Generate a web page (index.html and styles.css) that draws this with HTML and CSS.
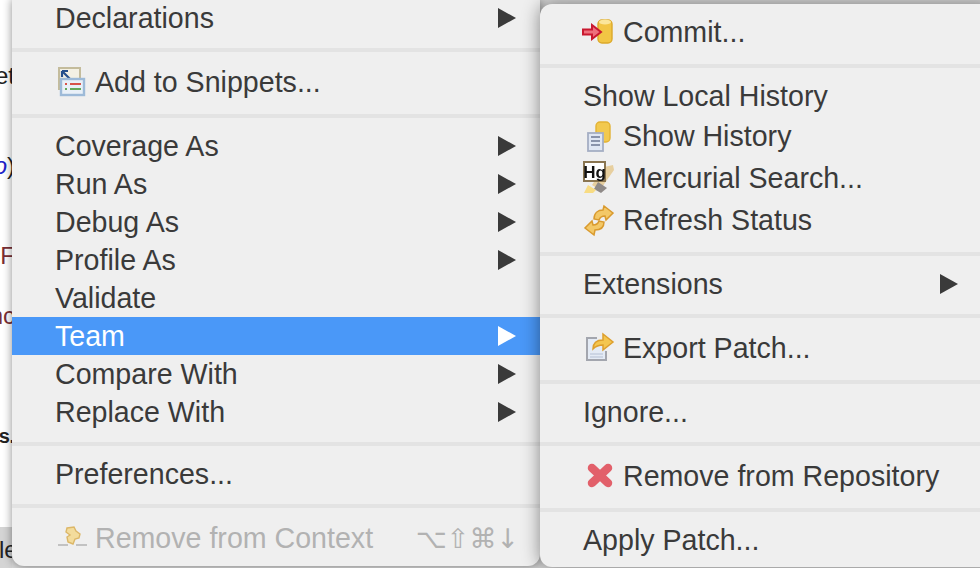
FILE: index.html
```html
<!DOCTYPE html>
<html lang="en">
<head>
    <meta charset="UTF-8">
    <title>Team menu</title>
    <link rel="stylesheet" href="styles.css">
</head>
<body>
    <div class="editor">
        <div class="code">
            <div class="line">&nbsp;</div>
            <div class="line">&nbsp;</div>
            <div class="line">et</div>
            <div class="line">&nbsp;</div>
            <div class="line">&nbsp;</div>
            <div class="line blue"><i>o</i><span class="dark">)</span></div>
            <div class="line">&nbsp;</div>
            <div class="line">&nbsp;</div>
            <div class="line maroon">nF</div>
            <div class="line">&nbsp;</div>
            <div class="line maroon">nc</div>
            <div class="line">&nbsp;</div>
            <div class="line">&nbsp;</div>
            <div class="line">&nbsp;</div>
            <div class="line dots">s .</div>
        </div>
        <div class="status">le</div>
    </div>

    <div class="menu menu-main">
        <div class="item">Declarations<span class="arrow"></span></div>
        <div class="sep"></div>
        <div class="item tall">
            <svg class="icon" viewBox="0 0 40 42">
                <rect x="4" y="7" width="21" height="21" fill="#f4f1e4" stroke="#c4bc9c" stroke-width="2"/>
                <path d="M7 10l9 9M7 10h6M7 10v6" stroke="#26508c" stroke-width="2.2" fill="none"/>
                <rect x="6" y="18" width="23" height="16" fill="#e9f0f8" stroke="#9dbad8" stroke-width="2.400"/>
                <path d="M10 23h2M15 23h11" stroke="#d8534a" stroke-width="2"/>
                <path d="M10 28h2M15 28h11" stroke="#63a85a" stroke-width="2"/>
            </svg>
            Add to Snippets...
        </div>
        <div class="sep"></div>
        <div class="item">Coverage As<span class="arrow"></span></div>
        <div class="item">Run As<span class="arrow"></span></div>
        <div class="item">Debug As<span class="arrow"></span></div>
        <div class="item">Profile As<span class="arrow"></span></div>
        <div class="item">Validate</div>
        <div class="item active">Team<span class="arrow"></span></div>
        <div class="item">Compare With<span class="arrow"></span></div>
        <div class="item">Replace With<span class="arrow"></span></div>
        <div class="sep"></div>
        <div class="item">Preferences...</div>
        <div class="sep"></div>
        <div class="item tall disabled">
            <svg class="icon" viewBox="0 0 40 42">
                <path d="M3 28h10M21 28h11" stroke="#b4b4b4" stroke-width="1.6"/>
                <path d="M12 11l7-1 2 4 4 3-1 4-4 1-2 5-5-2-1-5 3-2-4-3z" fill="#f3dc9c" stroke="#dcb768" stroke-width="1.4"/>
            </svg>
            Remove from Context
            <span class="shortcut">⌥⇧⌘↓</span>
        </div>
    </div>

    <div class="menu menu-sub">
        <div class="item tall">
            <svg class="icon" viewBox="0 0 40 42">
                <rect x="15" y="9" width="14" height="23" rx="4" fill="#f2c544" stroke="#dca92a" stroke-width="1.4"/>
                <ellipse cx="22" cy="11" rx="6" ry="2.5" fill="#fbe69a"/>
                <path d="M0 18.5h9V14l9 7-9 7v-4.500H0z" fill="#ee6f7c" stroke="#c9182f" stroke-width="2"/>
            </svg>
            Commit...
        </div>
        <div class="sep"></div>
        <div class="item">Show Local History</div>
        <div class="item tall">
            <svg class="icon" viewBox="0 0 40 42">
                <rect x="13" y="7" width="14" height="20" rx="4" fill="#f2c94f" stroke="#e3b335" stroke-width="1.4"/>
                <rect x="5" y="18" width="15" height="18" fill="#dfe6f3" stroke="#a5aec4" stroke-width="1.800"/>
                <path d="M8 22h9M8 26h9M8 30h9" stroke="#6d7894" stroke-width="1.500"/>
            </svg>
            Show History
        </div>
        <div class="item tall">
            <svg class="icon" viewBox="0 0 40 42">
                <path d="M21 10l9-2 1 5-14 20-8-5z" fill="#e7cf9f"/>
                <path d="M15 25l9 6-6 5-7-4z" fill="#8f8a88"/>
                <path d="M1 36l4-8 8 5-3 3z" fill="#f8dc83"/>
                <rect x="1" y="5" width="21" height="19" fill="#fff" stroke="#8a7550" stroke-width="2"/>
                <text class="hg" x="11.500" y="20.500" text-anchor="middle">Hg</text>
            </svg>
            Mercurial Search...
        </div>
        <div class="item tall">
            <svg class="icon" viewBox="0 0 40 42">
                <path d="M11 20c0-6 4-9 9-9l1-4 9 7-7 7-1-4c-3 0-5 1-6 4z" fill="#f3c867" stroke="#d99a2e" stroke-width="1.500"/>
                <path d="M21 23c0 6-4 8-9 8l-1 5-9-7 7-7 1 4c3 0 5-1 6-4z" fill="#f3c867" stroke="#d99a2e" stroke-width="1.500"/>
            </svg>
            Refresh Status
        </div>
        <div class="sep"></div>
        <div class="item">Extensions<span class="arrow"></span></div>
        <div class="sep"></div>
        <div class="item tall">
            <svg class="icon" viewBox="0 0 40 42">
                <path d="M14 11H4v22h19v-9" fill="#e4ebf5" stroke="#a3a6ae" stroke-width="2"/>
                <path d="M7 27h13M7 30h13" stroke="#c3cede" stroke-width="1.500"/>
                <path d="M10 22c0-6 4-9 10-9V7l10 8-10 8v-5c-4 0-7 1-10 4z" fill="#f4c64f" stroke="#dd9f2d" stroke-width="1.500"/>
            </svg>
            Export Patch...
        </div>
        <div class="sep"></div>
        <div class="item">Ignore...</div>
        <div class="sep"></div>
        <div class="item tall">
            <svg class="icon" viewBox="0 0 40 42">
                <path d="M9 13l16 15M25 13L9 28" stroke="#e2606a" stroke-width="8.500" stroke-linecap="round"/>
            </svg>
            Remove from Repository
        </div>
        <div class="sep"></div>
        <div class="item">Apply Patch...</div>
    </div>
</body>
</html>
```

FILE: styles.css
```css
html,
body {
    height: 100%;
}

body {
    display: flex;
    margin: 0;
    overflow: hidden;
    background: #d9d9d9;
    font-family: "Liberation Sans", Arial, sans-serif;
    font-size: 28.6px;
    color: #3a3a3a;
}

.editor {
    display: flex;
    flex-direction: column;
    flex: none;
    width: 12px;
    overflow: hidden;
    background: #fff;
    color: #222;
    font-size: 24px;
}

.code {
    flex: 1;
    padding-top: 1px;
}

.line {
    display: flex;
    justify-content: flex-end;
    height: 30px;
    margin-right: -3px;
    line-height: 30px;
    white-space: nowrap;
}

.dots {
    margin-right: 0;
    letter-spacing: -3px;
    font-weight: bold;
    font-size: 20px;
}

.blue {
    color: #2222c8;
}

.dark {
    color: #222;
}

.maroon {
    color: #7a2f35;
}

.status {
    height: 41px;
    margin-left: -1px;
    line-height: 46px;
    background: #d4d4d4;
    white-space: nowrap;
}

.menu {
    box-sizing: border-box;
    background: #efefef;
    box-shadow: 0 0 10px rgba(0, 0, 0, 0.45);
}

.menu-main {
    flex: none;
    width: 528px;
    height: 567px;
    margin-top: -1px;
    border-radius: 0 0 12px 12px;
}

.menu-sub {
    position: relative;
    flex: none;
    width: 452px;
    height: 563px;
    margin-top: 4px;
    padding-top: 7px;
    border-radius: 12px 0 0 12px;
    box-shadow: 0 0 18px rgba(0, 0, 0, 0.45);
}

.item {
    position: relative;
    display: flex;
    align-items: center;
    height: 38px;
    padding-left: 43px;
    white-space: nowrap;
}

.tall {
    height: 42px;
}

.active {
    background: #4a98f8;
    color: #fff;
}

.disabled {
    color: #b2b2b2;
}

.sep {
    height: 4px;
    margin: 11px 0 9px;
    background: #e3e3e3;
}

.icon {
    flex: none;
    width: 40px;
    height: 42px;
    overflow: visible;
    filter: blur(0.4px);
}

.hg {
    font-family: "Liberation Sans", sans-serif;
    font-size: 17px;
    font-weight: bold;
    fill: #111;
}

.arrow {
    position: absolute;
    top: 50%;
    left: 486px;
    margin-top: -10px;
    border-top: 10px solid transparent;
    border-bottom: 10px solid transparent;
    border-left: 18px solid #3a3a3a;
}

.menu-sub .arrow {
    left: 400px;
}

.active .arrow {
    border-left-color: #fff;
}

.shortcut {
    position: absolute;
    top: 50%;
    right: 21px;
    transform: translateY(-50%);
    font-family: "DejaVu Sans", sans-serif;
    font-size: 27px;
}
```
